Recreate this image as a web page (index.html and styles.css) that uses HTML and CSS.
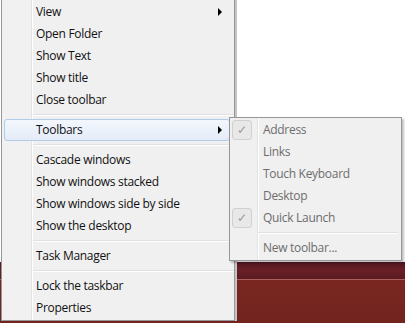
FILE: index.html
```html
<!DOCTYPE html>
<html lang="en">
<head>
    <meta charset="UTF-8">
    <meta name="viewport" content="width=device-width, initial-scale=1.0">
    <title>Taskbar menu</title>
    <link rel="stylesheet" href="styles.css">
</head>
<body>
    <div class="desk">
        <ul class="menu main-menu">
            <li class="item has-sub">View</li>
            <li class="item">Open Folder</li>
            <li class="item">Show Text</li>
            <li class="item">Show title</li>
            <li class="item">Close toolbar</li>
            <li class="sep"></li>
            <li class="item has-sub active">Toolbars</li>
            <li class="sep"></li>
            <li class="item">Cascade windows</li>
            <li class="item">Show windows stacked</li>
            <li class="item">Show windows side by side</li>
            <li class="item">Show the desktop</li>
            <li class="sep"></li>
            <li class="item">Task Manager</li>
            <li class="sep"></li>
            <li class="item">Lock the taskbar</li>
            <li class="item">Properties</li>
        </ul>

        <ul class="menu sub-menu">
            <li class="item checked">Address</li>
            <li class="item">Links</li>
            <li class="item">Touch Keyboard</li>
            <li class="item">Desktop</li>
            <li class="item checked">Quick Launch</li>
            <li class="sep"></li>
            <li class="item">New toolbar...</li>
        </ul>
    </div>
</body>
</html>
```

FILE: styles.css
```css
body {
    margin: 0;
    font-family: "Open Sans", "Noto Sans", sans-serif;
    font-size: 12px;
    letter-spacing: -0.3px;
    background: linear-gradient(to bottom,
        #ffffff 0, #ffffff 262px,
        #4f1520 262px, #6a1f26 270px, #5a1a22 279px,
        #b0605c 279px, #b0605c 280px,
        #7a2620 280px, #72241f 323px);
    height: 323px;
    overflow: hidden;
}

.desk {
    position: relative;
    height: 323px;
    padding-left: 1px;
}

.menu {
    list-style-type: none;
    margin: 0;
    padding: 0;
    background-color: #f0f0f0;
    border: 1px solid #979797;
    color: #111;
}

.main-menu {
    width: 232px;
    border-top: none;
    padding: 1px 0 1px 0;
    background: linear-gradient(to right,
        #f1f1f1 0, #f1f1f1 29px,
        #e2e3e3 29px, #e2e3e3 30px,
        #ffffff 30px, #ffffff 31px,
        #f0f0f0 31px);
    box-shadow: 2px 0 0 #c4c4c4;
}

.item {
    position: relative;
    height: 22px;
    line-height: 22px;
    padding-left: 34px;
    white-space: nowrap;
}

.has-sub::after {
    content: "";
    position: absolute;
    right: 12px;
    top: 7px;
    border-left: 4px solid #000;
    border-top: 4px solid transparent;
    border-bottom: 4px solid transparent;
}

.active::before {
    content: "";
    position: absolute;
    left: 2px;
    right: 4px;
    top: 0;
    bottom: 0;
    border: 1px solid #b3cbea;
    border-radius: 3px;
    background: linear-gradient(to bottom, #f3f7fd, #e4ecf8);
    z-index: -1;
}

.main-menu .item.active {
    z-index: 0;
}

.sep {
    height: 8px;
    margin-left: 31px;
    background: linear-gradient(to bottom,
        transparent 0, transparent 3px,
        #e0e0e0 3px, #e0e0e0 4px,
        #ffffff 4px, #ffffff 5px,
        transparent 5px);
}

.sub-menu {
    position: absolute;
    left: 229px;
    top: 117px;
    width: 171px;
    padding: 1px 0;
    color: #6d6d6d;
    background: linear-gradient(to right,
        #f0f0f0 0, #f0f0f0 27px,
        #e2e3e3 27px, #e2e3e3 28px,
        #ffffff 28px, #ffffff 29px,
        #f0f0f0 29px);
    box-shadow: 2px 2px 2px rgba(0, 0, 0, 0.25);
}

.sub-menu .item {
    padding-left: 33px;
}

.sub-menu .sep {
    margin-left: 28px;
    margin-right: 3px;
}

.checked::before {
    content: "\2713";
    position: absolute;
    left: 2px;
    top: 1px;
    width: 18px;
    height: 18px;
    line-height: 18px;
    text-align: center;
    font-size: 12px;
    color: #9a9a9a;
    border: 1px solid #d0d0d0;
    border-radius: 3px;
    background-color: #e8e8e8;
}
```
